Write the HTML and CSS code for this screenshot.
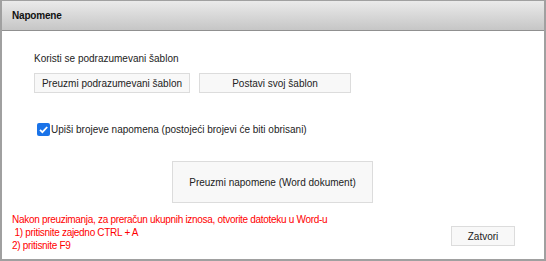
FILE: index.html
```html
<!DOCTYPE html>
<html>
<head>
<meta charset="utf-8">
<link rel="stylesheet" href="styles.css">
</head>
<body>
<div class="dialog">
  <div class="header">Napomene</div>
  <div class="content">
    <div class="section">
      <div class="label">Koristi se podrazumevani šablon</div>
      <div class="row">
        <button class="btn btn-default">Preuzmi podrazumevani šablon</button>
        <button class="btn btn-own">Postavi svoj šablon</button>
      </div>
    </div>
    <label class="check">
      <span class="box"><svg viewBox="0 0 13 13" width="13" height="13"><path d="M3 6.8 L5.4 9.2 L10.2 4" fill="none" stroke="#fff" stroke-width="1.8"/></svg></span>
      <span>Upiši brojeve napomena (postojeći brojevi će biti obrisani)</span>
    </label>
    <div class="big-row">
      <button class="btn btn-big">Preuzmi napomene (Word dokument)</button>
    </div>
    <div class="footer">
      <div class="note">
        <div>Nakon preuzimanja, za preračun ukupnih iznosa, otvorite datoteku u Word-u</div>
        <div>&nbsp;1) pritisnite zajedno CTRL + A</div>
        <div>2) pritisnite F9</div>
      </div>
      <button class="btn btn-close">Zatvori</button>
    </div>
  </div>
</div>
</body>
</html>
```
FILE: styles.css
```css
html, body {
  margin: 0;
  padding: 0;
  background: #fff;
}
body {
  font-family: "Liberation Sans", Arial, sans-serif;
  font-size: 10px;
  color: #222;
}
.dialog {
  width: 542px;
  height: 258px;
  border: 2px solid #a0a0a0;
  border-top-width: 1px;
  border-bottom-width: 2px;
  display: flex;
  flex-direction: column;
  background: #fff;
}
.header {
  height: 30px;
  box-sizing: border-box;
  border-bottom: 1px solid #909090;
  background: linear-gradient(#eaeaea, #c6c6c6);
  font-weight: bold;
  font-size: 10px;
  letter-spacing: -0.2px;
  color: #111;
  padding-left: 10px;
  line-height: 30px;
}
.content {
  flex: 1;
  display: flex;
  flex-direction: column;
}
.section {
  padding: 21px 0 0 32px;
}
.label {
  line-height: 14px;
  height: 14px;
}
.row {
  display: flex;
  gap: 9px;
  margin-top: 7px;
}
.btn {
  font-family: "Liberation Sans", Arial, sans-serif;
  font-size: 10px;
  color: #222;
  background: #f8f8f8;
  border: 1px solid #dcdcdc;
  padding: 0;
  margin: 0;
  border-radius: 0;
}
.btn-default { width: 156px; height: 20px; }
.btn-own { width: 152px; height: 20px; }
.check {
  display: flex;
  align-items: center;
  margin: 29px 0 0 35px;
  height: 14px;
  gap: 1px;
}
.box {
  width: 13px;
  height: 13px;
  background: #1a73e8;
  border-radius: 2px;
  display: block;
}
.box svg { display: block; }
.big-row {
  padding-left: 170px;
  margin-top: 25px;
}
.btn-big { width: 201px; height: 42px; }
.footer {
  display: flex;
  align-items: flex-end;
  justify-content: space-between;
  padding: 0 29px 0 10px;
  margin-top: 10px;
}
.note {
  color: #ff0000;
  line-height: 13px;
  letter-spacing: -0.3px;
}
.btn-close { width: 64px; height: 20px; margin-bottom: 6px; }
```
